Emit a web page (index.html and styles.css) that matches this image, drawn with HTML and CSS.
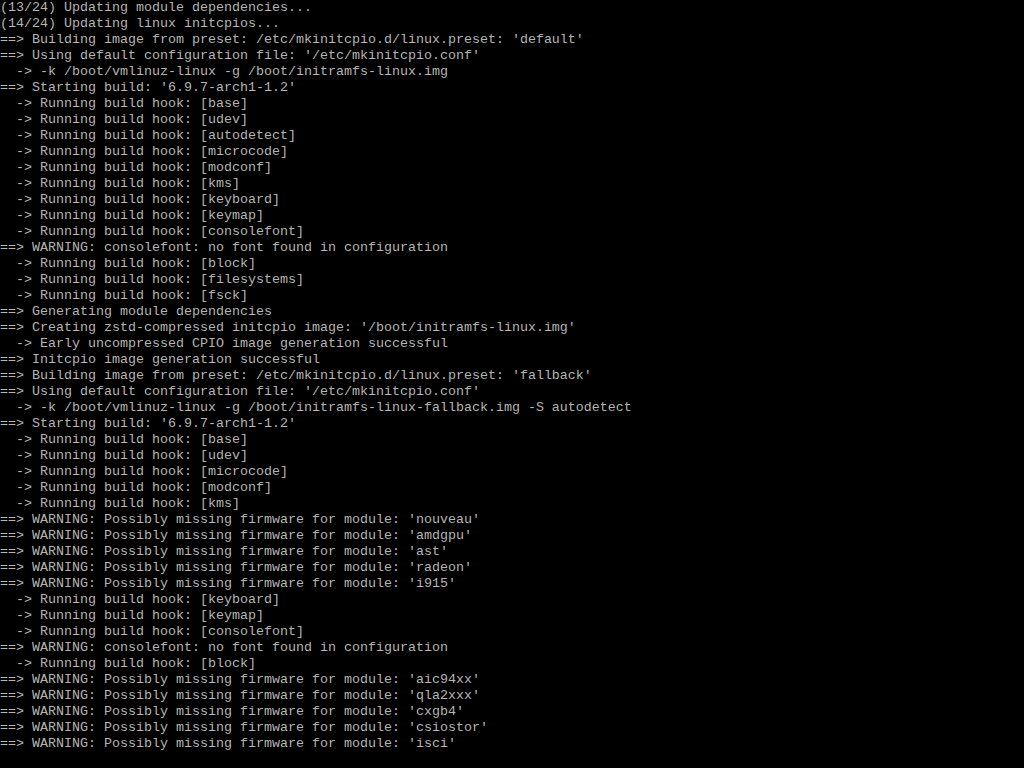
FILE: index.html
```html
<!DOCTYPE html>
<html>
<head>
<meta charset="utf-8">
<link rel="stylesheet" href="styles.css">
</head>
<body>
<pre class="console">(13/24) Updating module dependencies...
(14/24) Updating linux initcpios...
==> Building image from preset: /etc/mkinitcpio.d/linux.preset: 'default'
==> Using default configuration file: '/etc/mkinitcpio.conf'
  -> -k /boot/vmlinuz-linux -g /boot/initramfs-linux.img
==> Starting build: '6.9.7-arch1-1.2'
  -> Running build hook: [base]
  -> Running build hook: [udev]
  -> Running build hook: [autodetect]
  -> Running build hook: [microcode]
  -> Running build hook: [modconf]
  -> Running build hook: [kms]
  -> Running build hook: [keyboard]
  -> Running build hook: [keymap]
  -> Running build hook: [consolefont]
==> WARNING: consolefont: no font found in configuration
  -> Running build hook: [block]
  -> Running build hook: [filesystems]
  -> Running build hook: [fsck]
==> Generating module dependencies
==> Creating zstd-compressed initcpio image: '/boot/initramfs-linux.img'
  -> Early uncompressed CPIO image generation successful
==> Initcpio image generation successful
==> Building image from preset: /etc/mkinitcpio.d/linux.preset: 'fallback'
==> Using default configuration file: '/etc/mkinitcpio.conf'
  -> -k /boot/vmlinuz-linux -g /boot/initramfs-linux-fallback.img -S autodetect
==> Starting build: '6.9.7-arch1-1.2'
  -> Running build hook: [base]
  -> Running build hook: [udev]
  -> Running build hook: [microcode]
  -> Running build hook: [modconf]
  -> Running build hook: [kms]
==> WARNING: Possibly missing firmware for module: 'nouveau'
==> WARNING: Possibly missing firmware for module: 'amdgpu'
==> WARNING: Possibly missing firmware for module: 'ast'
==> WARNING: Possibly missing firmware for module: 'radeon'
==> WARNING: Possibly missing firmware for module: 'i915'
  -> Running build hook: [keyboard]
  -> Running build hook: [keymap]
  -> Running build hook: [consolefont]
==> WARNING: consolefont: no font found in configuration
  -> Running build hook: [block]
==> WARNING: Possibly missing firmware for module: 'aic94xx'
==> WARNING: Possibly missing firmware for module: 'qla2xxx'
==> WARNING: Possibly missing firmware for module: 'cxgb4'
==> WARNING: Possibly missing firmware for module: 'csiostor'
==> WARNING: Possibly missing firmware for module: 'isci'</pre>
</body>
</html>
```

FILE: styles.css
```css
html, body {
  margin: 0;
  padding: 0;
  background: #000;
  width: 1024px;
  height: 768px;
  overflow: hidden;
}
.console {
  margin: 0;
  padding: 0;
  font-family: "Liberation Mono", "DejaVu Sans Mono", monospace;
  font-size: 13.333px;
  line-height: 16px;
  color: #b4b4b4;
  white-space: pre;
}
```
